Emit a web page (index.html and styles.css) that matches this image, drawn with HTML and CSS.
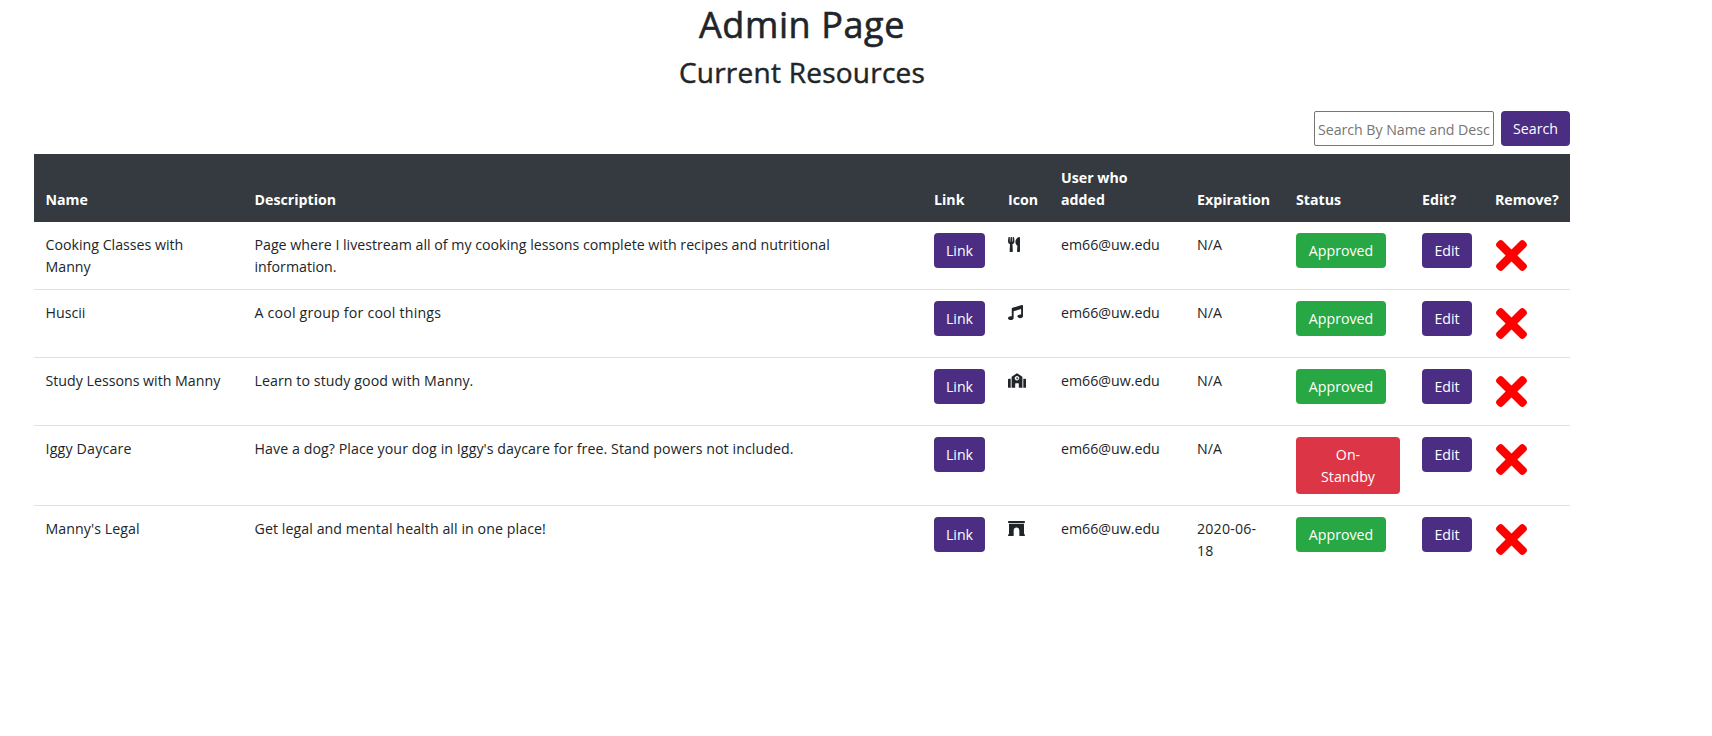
FILE: index.html
```html
<!DOCTYPE html>
<html lang="en">
<head>
<meta charset="utf-8">
<title>Admin Page</title>
<link rel="stylesheet" href="styles.css">
</head>
<body>
<svg class="sprite" aria-hidden="true">
<symbol id="utensils" viewBox="0 0 416 512"><path d="M207.9 15.2c.8 4.7 16.1 94.5 16.1 128.8 0 52.3-27.8 89.6-68.9 104.6L168 486.7c.7 13.7-10.2 25.3-24 25.3H80c-13.7 0-24.7-11.5-24-25.3l12.9-238.1C27.7 233.6 0 196.2 0 144 0 109.6 15.3 19.9 16.1 15.2 19.3-5.1 61.4-5.4 64 16.3v141.2c1.3 3.4 15.1 3.2 16 0 1.4-25.3 7.9-139.2 8-141.8 3.3-20.8 44.7-20.8 47.9 0 .2 2.7 6.6 116.5 8 141.8.9 3.2 14.8 3.4 16 0V16.3c2.6-21.6 44.8-21.4 48-1.1zm119.2 285.7l-15 185.1c-1.2 14 9.9 26 23.9 26h56c13.3 0 24-10.7 24-24V24c0-13.2-10.7-24-24-24-82.5 0-221.4 178.5-64.9 300.9z"/></symbol>
<symbol id="music" viewBox="0 0 512 512"><path d="M511.99 32.01c0-21.71-21.1-37.01-41.6-30.51L150.4 96c-13.3 4.2-22.4 16.5-22.4 30.5v261.42c-10.05-2.38-20.72-3.92-32-3.92-53.02 0-96 28.65-96 64s42.98 64 96 64 96-28.65 96-64V214.31l256-75.02v184.63c-10.05-2.38-20.72-3.92-32-3.92-53.02 0-96 28.65-96 64s42.98 64 96 64 96-28.65 96-64l-.01-351.99z"/></symbol>
<symbol id="school" viewBox="0 0 640 512"><path d="M0 224v272c0 8.84 7.16 16 16 16h80V192H32c-17.67 0-32 14.33-32 32zm360-48h-24v-40c0-4.42-3.58-8-8-8h-16c-4.42 0-8 3.58-8 8v64c0 4.42 3.58 8 8 8h48c4.42 0 8-3.58 8-8v-16c0-4.42-3.58-8-8-8zm137.75-63.96l-160-106.67a32.02 32.02 0 0 0-35.5 0l-160 106.67A32.002 32.002 0 0 0 128 138.66V512h128V368c0-8.84 7.16-16 16-16h96c8.84 0 16 7.16 16 16v144h128V138.67c0-10.7-5.35-20.69-14.25-26.63zM320 256c-44.18 0-80-35.82-80-80s35.82-80 80-80 80 35.82 80 80-35.82 80-80 80zm288-64h-64v320h80c8.84 0 16-7.16 16-16V224c0-17.67-14.33-32-32-32z"/></symbol>
<symbol id="archway" viewBox="0 0 576 512"><path d="M560 448h-16V96H32v352H16.02c-8.84 0-16 7.16-16 16v32c0 8.84 7.16 16 16 16H176c8.84 0 16-7.16 16-16V320c0-53.02 42.98-96 96-96s96 42.98 96 96l.02 160v16c0 8.84 7.16 16 16 16H560c8.84 0 16-7.16 16-16v-32c0-8.84-7.16-16-16-16zm0-448H16C7.16 0 0 7.16 0 16v32c0 8.84 7.16 16 16 16h544c8.84 0 16-7.16 16-16V16c0-8.84-7.16-16-16-16z"/></symbol>
<symbol id="times" viewBox="0 80 352 352"><path d="M242.72 256l100.07-100.07c12.28-12.28 12.28-32.19 0-44.48l-22.24-22.24c-12.28-12.28-32.19-12.28-44.48 0L176 189.28 75.93 89.21c-12.28-12.28-32.19-12.28-44.48 0L9.21 111.45c-12.28 12.28-12.28 32.19 0 44.48L109.28 256 9.21 356.07c-12.28 12.28-12.28 32.19 0 44.48l22.24 22.24c12.28 12.28 32.2 12.28 44.48 0L176 322.72l100.07 100.07c12.28 12.28 32.2 12.28 44.48 0l22.24-22.24c12.28-12.28 12.28-32.19 0-44.48L242.72 256z"/></symbol>
</svg>
<main class="page">
<h1 class="title">Admin Page</h1>
<h2 class="subtitle">Current Resources</h2>
<form class="search"><input class="search-input" type="text" placeholder="Search By Name and Description"><button class="btn btn-search" type="button">Search</button></form>
<table class="resources">
<colgroup><col class="c-name"><col class="c-desc"><col class="c-link"><col class="c-icon"><col class="c-user"><col class="c-exp"><col class="c-status"><col class="c-edit"><col class="c-remove"></colgroup>
<thead><tr><th>Name</th><th>Description</th><th>Link</th><th>Icon</th><th>User who<br>added</th><th>Expiration</th><th>Status</th><th>Edit?</th><th>Remove?</th></tr></thead>
<tbody>
<tr><td>Cooking Classes with<br>Manny</td><td>Page where I livestream all of my cooking lessons complete with recipes and nutritional<br>information.</td><td><button class="btn link">Link</button></td><td><svg class="icon utensils"><use href="#utensils"/></svg></td><td>em66@uw.edu</td><td>N/A</td><td><button class="btn approved">Approved</button></td><td><button class="btn">Edit</button></td><td><svg class="remove"><use href="#times"/></svg></td></tr>
<tr><td>Huscii</td><td class="looser">A cool group for cool things</td><td><button class="btn link">Link</button></td><td><svg class="icon music"><use href="#music"/></svg></td><td>em66@uw.edu</td><td>N/A</td><td><button class="btn approved">Approved</button></td><td><button class="btn">Edit</button></td><td><svg class="remove"><use href="#times"/></svg></td></tr>
<tr><td>Study Lessons with Manny</td><td class="loose">Learn to study good with Manny.</td><td><button class="btn link">Link</button></td><td><svg class="icon school"><use href="#school"/></svg></td><td>em66@uw.edu</td><td>N/A</td><td><button class="btn approved">Approved</button></td><td><button class="btn">Edit</button></td><td><svg class="remove"><use href="#times"/></svg></td></tr>
<tr class="tall"><td class="looser">Iggy Daycare</td><td class="loose">Have a dog? Place your dog in Iggy's daycare for free. Stand powers not included.</td><td><button class="btn link">Link</button></td><td></td><td>em66@uw.edu</td><td>N/A</td><td><button class="btn standby">On-<br>Standby</button></td><td><button class="btn">Edit</button></td><td><svg class="remove"><use href="#times"/></svg></td></tr>
<tr><td class="loose">Manny's Legal</td><td class="loose">Get legal and mental health all in one place!</td><td><button class="btn link">Link</button></td><td><svg class="icon archway"><use href="#archway"/></svg></td><td>em66@uw.edu</td><td class="looser">2020-06-<br>18</td><td><button class="btn approved">Approved</button></td><td><button class="btn">Edit</button></td><td><svg class="remove"><use href="#times"/></svg></td></tr>
</tbody>
</table>
</main>
</body>
</html>
```
FILE: styles.css
```css
* { box-sizing: border-box; }
body { margin: 0; background: #fff; color: #212529; font: 14.2px/22px "Open Sans", "Noto Sans", sans-serif; }
.sprite { display: none; }
.page { width: 1536px; margin-left: 34px; }
.title, .subtitle { margin: 0; text-align: center; font-weight: 500; }
.title { padding-top: 3px; font-size: 36px; line-height: 44px; letter-spacing: .6px; -webkit-text-stroke: .6px #212529; }
.subtitle { padding-top: 8px; font-size: 28px; line-height: 35px; letter-spacing: .24px; -webkit-text-stroke: .45px #212529; }
.search { display: flex; justify-content: flex-end; gap: 7px; margin: 21px 0 8px; }
.search-input { width: 180px; height: 35px; padding: 2px 3px 0; border: 1px solid #767676; border-radius: 2px; font: inherit; letter-spacing: -.04px; color: inherit; }
.search-input::placeholder { color: #757575; }
.btn { display: block; height: 35px; padding: 0; width: 50px; border: 0; border-radius: 4px; background: #4b2e83; color: #fff; font: inherit; text-align: center; }
.link { width: 51px; }
.btn-search { width: 69px; padding-top: 1px; }
.approved { width: 90px; background: #28a745; }
.standby { width: 104px; height: 57px; background: #dc3545; }
.resources { width: 100%; table-layout: fixed; border-collapse: separate; border-spacing: 0; }
.c-name { width: 209px; } .c-desc { width: 680px; } .c-link { width: 74px; } .c-icon { width: 53px; } .c-user { width: 136px; }
.c-exp { width: 99px; } .c-status { width: 126px; } .c-edit { width: 73px; } .c-remove { width: 86px; }
th { height: 68px; padding: 12px 0 11px 11px; background: #343a40; color: #fff; text-align: left; vertical-align: bottom; font-weight: 700; white-space: nowrap; }
td { height: 68px; padding: 12px 0 0 11px; border-top: 1px solid #dee2e6; vertical-align: top; white-space: nowrap; }
td:nth-child(-n+2), th:nth-child(-n+2) { padding-left: 11.5px; }
tbody tr:first-child td { height: 67px; border-top: 0; }
tbody tr.tall td { height: 80px; }
.loose { letter-spacing: .07px; }
.looser { letter-spacing: .19px; }
td .btn { margin-top: -1px; }
.icon { display: block; height: 15px; margin-top: 3px; fill: #212529; }
.utensils { width: 12px; } .music { width: 15px; } .school { width: 18px; } .archway { width: 17px; }
.remove { display: block; width: 31px; height: 31px; margin: 5.5px 0 0 .5px; fill: #f00; }
```
